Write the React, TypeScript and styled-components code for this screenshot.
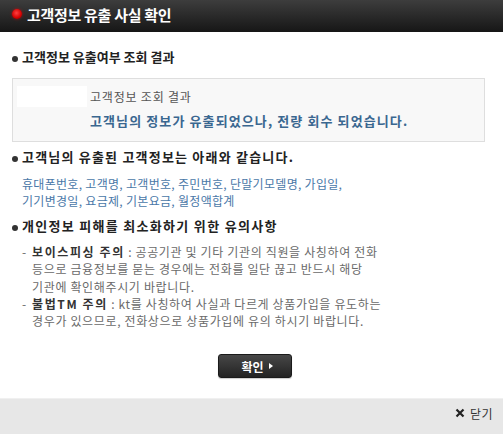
import React from 'react'
import styled, { createGlobalStyle } from 'styled-components';

const GlobalStyle = createGlobalStyle`
  html, body {
    margin: 0;
    padding: 0;
    background: #fff;
  }
  body {
    font-family: "Noto Sans CJK KR", "Noto Sans", sans-serif;
    font-size: 12px;
    color: #666;
  }
`;

const Popup = styled.div`
  width: 503px;
  height: 434px;
  display: flex;
  flex-direction: column;
  overflow: hidden;
`;

const Header = styled.div`
  height: 32px;
  display: flex;
  align-items: center;
  padding: 0 0 4px 12px;
  box-sizing: border-box;
  background: linear-gradient(#3d3d3d, #161616);
`;

const RedDot = styled.span`
  width: 10px;
  height: 10px;
  border-radius: 50%;
  background: radial-gradient(circle at 45% 40%, #ff4040, #d40000 60%, #8a0000);
  box-shadow: 0 0 3px rgba(255, 0, 0, 0.6);
  margin-right: 5px;
`;

const Title = styled.h1`
  margin: 0;
  font-size: 15px;
  font-weight: bold;
  color: #fff;
  letter-spacing: -0.3px;
`;

const Content = styled.div`
  padding: 16px 0 0 12px;
  flex: 1;
`;

const Heading = styled.h2<{ $gap?: number; $spacing?: number }>`
  position: relative;
  margin: ${(p) => p.$gap ?? 0}px 0 0;
  padding-left: 10px;
  font-size: 13px;
  line-height: 18px;
  font-weight: bold;
  color: #222;
  letter-spacing: ${(p) => p.$spacing ?? 0}px;

  &::before {
    content: '';
    position: absolute;
    left: 0;
    top: 8px;
    width: 6px;
    height: 6px;
    border-radius: 50%;
    background: #333;
  }
`;

const ResultBox = styled.div`
  margin: 12px 0 0;
  width: 473px;
  box-sizing: border-box;
  display: flex;
  gap: 3px;
  padding: 7px 4px 11px;
  border: 1px solid #dedede;
  background: #f8f8f8;
`;

const Blank = styled.div`
  width: 70px;
  height: 21px;
  background: #fff;
`;

const ResultText = styled.div`
  display: flex;
  flex-direction: column;
`;

const Label = styled.div`
  line-height: 21px;
  color: #555;
  letter-spacing: 0.8px;
`;

const Message = styled.div`
  margin-top: 5px;
  line-height: 18px;
  font-size: 13px;
  font-weight: bold;
  color: #3a6790;
  letter-spacing: 1.1px;
`;

const InfoList = styled.p`
  margin: 9px 0 0 10px;
  line-height: 17px;
  color: #4a78a8;
  letter-spacing: 0.3px;
`;

const Notes = styled.ul`
  list-style: none;
  margin: 8px 0 0;
  padding: 0 0 0 10px;
`;

const Note = styled.li`
  display: flex;
  line-height: 17.3px;
  color: #6a6a6a;
  letter-spacing: 0.65px;
`;

const Dash = styled.span`
  width: 10px;
  flex: none;
`;

const Strong = styled.b`
  color: #333;
  letter-spacing: 1.6px;
`;

const ButtonRow = styled.div`
  display: flex;
  justify-content: center;
  padding-right: 5px;
  margin-top: 25px;
`;

const ConfirmButton = styled.button`
  width: 74px;
  height: 24px;
  display: flex;
  align-items: center;
  justify-content: center;
  gap: 5px;
  border: 1px solid #1a1a1a;
  border-radius: 3px;
  background: linear-gradient(#474747, #232323);
  color: #fff;
  font-family: inherit;
  font-size: 12px;
  font-weight: bold;
  cursor: pointer;
  padding: 0 0 0 4px;
  box-shadow: 0 1px 1px rgba(0, 0, 0, 0.2);
`;

const Arrow = styled.span`
  width: 0;
  height: 0;
  border-top: 3px solid transparent;
  border-bottom: 3px solid transparent;
  border-left: 4px solid #fff;
`;

const Footer = styled.div`
  height: 36px;
  box-sizing: border-box;
  border-top: 1px solid #f0f0f0;
  background: #e7e7e7;
  display: flex;
  justify-content: flex-end;
  padding: 5px 10px 0 0;
`;

const CloseLink = styled.a`
  display: flex;
  align-items: center;
  gap: 5px;
  height: 18px;
  color: #333;
  font-size: 12px;
  letter-spacing: 0.5px;
  text-decoration: none;
  cursor: pointer;
`;

export default function App() {
  return (
    <Popup>
      <GlobalStyle />
      <Header>
        <RedDot />
        <Title>고객정보 유출 사실 확인</Title>
      </Header>
      <Content>
        <Heading>고객정보 유출여부 조회 결과</Heading>
        <ResultBox>
          <Blank />
          <ResultText>
            <Label>고객정보 조회 결과</Label>
            <Message>고객님의 정보가 유출되었으나, 전량 회수 되었습니다.</Message>
          </ResultText>
        </ResultBox>

        <Heading $gap={6} $spacing={1.2}>고객님의 유출된 고객정보는 아래와 같습니다.</Heading>
        <InfoList>
          휴대폰번호, 고객명, 고객번호, 주민번호, 단말기모델명, 가입일,
          <br />
          기기변경일, 요금제, 기본요금, 월정액합계
        </InfoList>

        <Heading $gap={8} $spacing={1.3}>개인정보 피해를 최소화하기 위한 유의사항</Heading>
        <Notes>
          <Note>
            <Dash>-</Dash>
            <span>
              <Strong>보이스피싱 주의</Strong> : 공공기관 및 기타 기관의 직원을 사칭하여 전화
              <br />
              등으로 금융정보를 묻는 경우에는 전화를 일단 끊고 반드시 해당
              <br />
              기관에 확인해주시기 바랍니다.
            </span>
          </Note>
          <Note>
            <Dash>-</Dash>
            <span>
              <Strong>불법TM 주의</Strong> : kt를 사칭하여 사실과 다르게 상품가입을 유도하는
              <br />
              경우가 있으므로, 전화상으로 상품가입에 유의 하시기 바랍니다.
            </span>
          </Note>
        </Notes>

        <ButtonRow>
          <ConfirmButton>
            확인 <Arrow />
          </ConfirmButton>
        </ButtonRow>
      </Content>
      <Footer>
        <CloseLink>
          <svg width="10" height="10" viewBox="0 0 10 10">
            <path d="M1.5 1.5 L8.5 8.5 M8.5 1.5 L1.5 8.5" stroke="#222" strokeWidth="2.2" />
          </svg>
          닫기
        </CloseLink>
      </Footer>
    </Popup>
  )
}
